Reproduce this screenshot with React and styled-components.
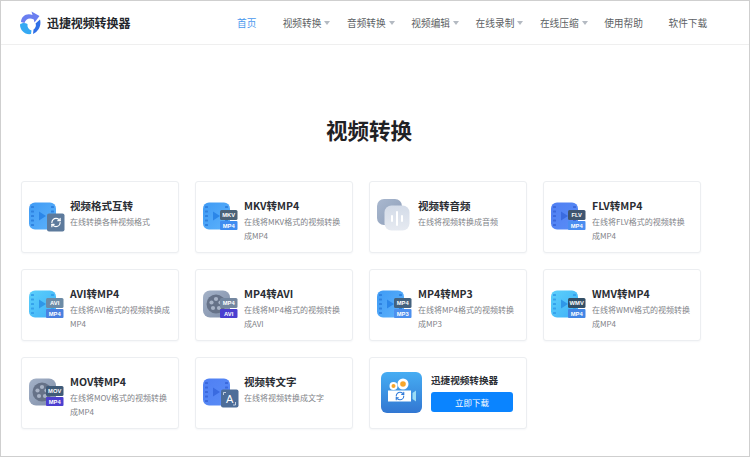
import React from "react"
import styled, { createGlobalStyle } from "styled-components"
import { RefreshCw } from "lucide-react"

const GlobalStyle = createGlobalStyle`
    html, body
    {
        margin: 0;
        padding: 0;
        background: #fff;
        font-family: "Noto Sans CJK SC", "Noto Sans", sans-serif;
    }
`;

const Page = styled.div`
    box-sizing: border-box;
    width: 750px;
    height: 457px;
    overflow: hidden;
    background: #fff;
    border: 1px solid #cfcfcf;
`;

const Header = styled.header`
    display: flex;
    align-items: center;
    height: 43px;
    border-bottom: 1px solid #efefef;
    padding-left: 18px;
`;

const Brand = styled.div`
    display: flex;
    align-items: center;
    gap: 6px;
    width: 218px;
    font-size: 12px;
    font-weight: 700;
    color: #23262b;
    letter-spacing: -0.1px;
    white-space: nowrap;
`;

const Nav = styled.nav`
    display: flex;
    gap: 24.3px;
    font-size: 9.7px;
    color: #555;
`;

const NavItem = styled.a`
    display: flex;
    flex: none;
    align-items: center;
    width: ${props => props.$active ? "20px" : "40px"};
    white-space: nowrap;
    color: ${props => props.$active ? "#4a98ee" : "#5c5f64"};
    margin-right: ${props => props.$active ? "1.4px" : "0"};
`;

const Caret = styled.i`
    flex: none;
    width: 0;
    height: 0;
    margin: 0 -10px 0 3px;
    border-left: 3px solid transparent;
    border-right: 3px solid transparent;
    border-top: 4px solid #b4bac2;
`;

const Title = styled.h1`
    margin: 70px 0 36px;
    height: 30px;
    line-height: 30px;
    font-size: 21.5px;
    font-weight: 700;
    color: #1f2125;
    text-align: center;
    padding-right: 12px;
`;

const Grid = styled.div`
    display: grid;
    grid-template-columns: repeat(4, 158px);
    grid-auto-rows: 72px;
    gap: 16px;
    margin-left: 20px;
`;

const Card = styled.a`
    box-sizing: border-box;
    display: flex;
    align-items: flex-start;
    gap: 5px;
    padding: 17px 7px 0;
    background: #fff;
    border: 1px solid #eceef1;
    border-radius: 3px;
    box-shadow: 0 1px 2px rgba(30, 50, 90, 0.04);
`;

const IconSlot = styled.div`
    flex-shrink: 0;
    width: 36px;
    height: 32px;
    margin-top: 3px;
`;

const CardText = styled.div`
    width: 100px;
`;

const CardTitle = styled.div`
    height: 14px;
    line-height: 14px;
    font-size: 10.5px;
    font-weight: 700;
    color: #2a2d33;
    white-space: nowrap;
`;

const CardDesc = styled.div`
    margin-top: 2px;
    line-height: 14px;
    font-size: 8px;
    color: #7f8389;
`;

const PromoCard = styled(Card)`
    gap: 9px;
    padding: 14px 11px 0;
`;

const PromoBody = styled.div`
    width: 82px;
`;

const PromoTitle = styled.div`
    height: 16px;
    line-height: 16px;
    font-size: 9.6px;
    font-weight: 700;
    color: #2a2d33;
    white-space: nowrap;
`;

const DownloadButton = styled.button`
    display: block;
    width: 82px;
    height: 20px;
    margin-top: 4px;
    padding: 0;
    border: 0;
    border-radius: 3px;
    background: #0a84ff;
    color: #fff;
    font-family: inherit;
    font-size: 8.5px;
    line-height: 20px;
`;


const Logo = () => (
    <svg width="22" height="24" viewBox="0 0 22 24">
        <path d="M2 11C2 5 8 1.5 13.5 4L12.5 0.5L20.5 5L15.5 11.5L14.8 8.5C10.5 6 6.5 8 5.5 12Z" fill="#6a7ef0" />
        <path d="M1 13.5C3 11.5 6 11.5 8.5 13C8 16 9.500 18.500 12.500 19.500L12 23C6 24 1 19.500 1 13.500Z" fill="#35a9f3" />
        <path d="M21 8.500C22.500 14 20 20 14 23L14.500 18.500C16.500 17 17.500 14.500 16.500 12.500Z" fill="#2f6fe6" />
    </svg>
);

// film strip base shared by most icons
const Film = ({ id, from, to, hole, play }) => (
    <>
        <defs>
            <linearGradient id={id} x1="0" y1="0" x2="1" y2="1">
                <stop offset="0" stopColor={from} />
                <stop offset="1" stopColor={to} />
            </linearGradient>
        </defs>
        <rect width="27" height="27" y="0.5" rx="6" fill={`url(#${id})`} />
        {[5, 9.5, 14, 18.5, 23].map(y => (
            <g key={y} fill={hole}>
                <rect x="2" y={y - 1} width="3" height="2" rx="0.5" />
                <rect x="22" y={y - 1} width="3" height="2" rx="0.5" />
            </g>
        ))}
        <path d="M10 9.5L17 14L10 18.5Z" fill={play} />
    </>
);

const Reel = ({ id }) => (
    <>
        <defs>
            <linearGradient id={id} x1="0" y1="0" x2="1" y2="1">
                <stop offset="0" stopColor="#a4b2c8" />
                <stop offset="1" stopColor="#7f8ea8" />
            </linearGradient>
        </defs>
        <rect width="27" height="27" y="0.5" rx="7" fill={`url(#${id})`} />
        <circle cx="13" cy="14" r="9.5" fill="#667288" />
        {[[13, 9], [8.5, 12.5], [17.5, 12.5], [10, 18], [16, 18]].map(([cx, cy]) => (
            <circle key={cx + "-" + cy} cx={cx} cy={cy} r="2.1" fill="#a8b3c6" />
        ))}
    </>
);

const Badges = ({ top, bottom }) => (
    <g fontFamily="'Liberation Sans', sans-serif" fontSize="5.8" fontWeight="700" fill="#fff" textAnchor="middle">
        <rect x="17" y="8" width="17.500" height="10" rx="1.5" fill={top.color} />
        <text x="25.700" y="15.200">{top.label}</text>
        <rect x="17" y="19" width="17.500" height="9" rx="1" fill={bottom.color} />
        <text x="25.700" y="25.700">{bottom.label}</text>
    </g>
);

const Overlay = ({ color, children }) => (
    <>
        <rect x="18" y="11.5" width="17.5" height="18" rx="2" fill={color} />
        {children}
    </>
);

const BLUE = { from: "#3f9bf5", to: "#5db2fb", hole: "#2f82e0", play: "#2b86e8" };
const ROYAL = { from: "#4f7ff3", to: "#5a8df6", hole: "#3b68dc", play: "#3a6be0" };
const CYAN = { from: "#5cd0fb", to: "#3fb0f7", hole: "#35a2ec", play: "#2f97e8" };

const FilmBadgeIcon = ({ id, film, top, bottom }) => (
    <svg width="36" height="32" viewBox="0 0 36 32">
        <Film id={id} {...film} />
        <Badges top={top} bottom={bottom} />
    </svg>
);

const ReelBadgeIcon = ({ id, top, bottom }) => (
    <svg width="36" height="32" viewBox="0 0 36 32">
        <Reel id={id} />
        <Badges top={top} bottom={bottom} />
    </svg>
);

const FormatIcon = () => (
    <svg width="36" height="32" viewBox="0 0 36 32">
        <Film id="film-format" {...BLUE} />
        <Overlay color="#5d7a9c">
            <RefreshCw x="21.5" y="15" width="11" height="11" color="#fff" strokeWidth="2.6" />
        </Overlay>
    </svg>
);

const AudioIcon = () => (
    <svg width="36" height="32" viewBox="0 0 36 32" style={{ marginTop: -3 }}>
        <defs>
            <linearGradient id="audio-back" x1="0" y1="0" x2="1" y2="1">
                <stop offset="0" stopColor="#a9b8cf" />
                <stop offset="1" stopColor="#8d9db8" />
            </linearGradient>
            <linearGradient id="audio-front" x1="0" y1="0" x2="0" y2="1">
                <stop offset="0" stopColor="#d3dbe8" />
                <stop offset="1" stopColor="#e6eaf1" />
            </linearGradient>
        </defs>
        <rect x="0" y="0" width="25" height="26" rx="7" fill="url(#audio-back)" />
        <rect x="7.5" y="6.5" width="25" height="25" rx="7" fill="url(#audio-front)" />
        <g fill="#fff">
            <rect x="14" y="16" width="2" height="7" rx="1" />
            <rect x="19" y="12" width="2" height="15" rx="1" />
            <rect x="24" y="16" width="2" height="7" rx="1" />
        </g>
    </svg>
);

const TextIcon = () => (
    <svg width="36" height="32" viewBox="0 0 36 32">
        <Film id="film-text" {...ROYAL} />
        <Overlay color="#4d6d98">
            <text x="26.700" y="24.500" fontFamily="'Liberation Sans', sans-serif" fontSize="11" fill="#fff" textAnchor="middle">A</text>
            <path d="M20.500 17V14.500H23M32.500 24V27H30" fill="none" stroke="#dfe8f4" strokeWidth="0.8" />
        </Overlay>
    </svg>
);

const AppIcon = () => (
    <svg width="41" height="41" viewBox="0 0 41 41">
        <defs>
            <linearGradient id="app-bg" x1="0" y1="0" x2="0" y2="1">
                <stop offset="0" stopColor="#46adf3" />
                <stop offset="1" stopColor="#3277d2" />
            </linearGradient>
        </defs>
        <rect width="41" height="41" rx="6" fill="url(#app-bg)" />
        <circle cx="12.5" cy="14" r="4" fill="#fff" />
        <circle cx="12.5" cy="14" r="2" fill="#f7a62b" />
        <circle cx="22" cy="12" r="5.5" fill="#fff" />
        <circle cx="22" cy="12" r="2.8" fill="#f7a62b" />
        <rect x="7" y="18.5" width="23" height="11" fill="#fff" />
        <path d="M31.5 21L35 18.5V29.5L31.5 27Z" fill="#9bdcf5" />
        <RefreshCw x="14" y="19" width="10" height="10" color="#2f7ad8" strokeWidth="2.6" />
    </svg>
);

const badge = (label, color) => ({ label, color });

const tools = [
    { title: "视频格式互转", desc: "在线转换各种视频格式", icon: <FormatIcon /> },
    { title: "MKV转MP4", desc: "在线将MKV格式的视频转换成MP4", icon: <FilmBadgeIcon id="f-mkv" film={BLUE} top={badge("MKV", "#4b6277")} bottom={badge("MP4", "#3f8cf0")} /> },
    { title: "视频转音频", desc: "在线将视频转换成音频", icon: <AudioIcon /> },
    { title: "FLV转MP4", desc: "在线将FLV格式的视频转换成MP4", icon: <FilmBadgeIcon id="f-flv" film={ROYAL} top={badge("FLV", "#3f5570")} bottom={badge("MP4", "#4a8df0")} /> },
    { title: "AVI转MP4", desc: "在线将AVI格式的视频转换成MP4", icon: <FilmBadgeIcon id="f-avi" film={CYAN} top={badge("AVI", "#6c8ba6")} bottom={badge("MP4", "#4a80e0")} /> },
    { title: "MP4转AVI", desc: "在线将MP4格式的视频转换成AVI", icon: <ReelBadgeIcon id="r-avi" top={badge("MP4", "#7487a0")} bottom={badge("AVI", "#4a3fd0")} /> },
    { title: "MP4转MP3", desc: "在线将MP4格式的视频转换成MP3", icon: <FilmBadgeIcon id="f-mp3" film={BLUE} top={badge("MP4", "#44627e")} bottom={badge("MP3", "#4d90ee")} /> },
    { title: "WMV转MP4", desc: "在线将WMV格式的视频转换成MP4", icon: <FilmBadgeIcon id="f-wmv" film={CYAN} top={badge("WMV", "#334e66")} bottom={badge("MP4", "#4286e5")} /> },
    { title: "MOV转MP4", desc: "在线将MOV格式的视频转换成MP4", icon: <ReelBadgeIcon id="r-mov" top={badge("MOV", "#3f5a78")} bottom={badge("MP4", "#4c3fd0")} /> },
    { title: "视频转文字", desc: "在线将视频转换成文字", icon: <TextIcon /> },
];

const navItems = [
    { label: "视频转换", caret: true },
    { label: "音频转换", caret: true },
    { label: "视频编辑", caret: true },
    { label: "在线录制", caret: true },
    { label: "在线压缩", caret: true },
    { label: "使用帮助" },
    { label: "软件下载" },
];

const App = () => (
    <Page>
        <GlobalStyle />
        <Header>
            <Brand>
                <Logo />
                迅捷视频转换器
            </Brand>
            <Nav>
                <NavItem $active>首页</NavItem>
                {navItems.map(item => (
                    <NavItem key={item.label}>
                        {item.label}
                        {item.caret && <Caret />}
                    </NavItem>
                ))}
            </Nav>
        </Header>
        <Title>视频转换</Title>
        <Grid>
            {tools.map(tool => (
                <Card key={tool.title}>
                    <IconSlot>{tool.icon}</IconSlot>
                    <CardText>
                        <CardTitle>{tool.title}</CardTitle>
                        <CardDesc>{tool.desc}</CardDesc>
                    </CardText>
                </Card>
            ))}
            <PromoCard>
                <AppIcon />
                <PromoBody>
                    <PromoTitle>迅捷视频转换器</PromoTitle>
                    <DownloadButton>立即下载</DownloadButton>
                </PromoBody>
            </PromoCard>
        </Grid>
    </Page>
);

export default App
